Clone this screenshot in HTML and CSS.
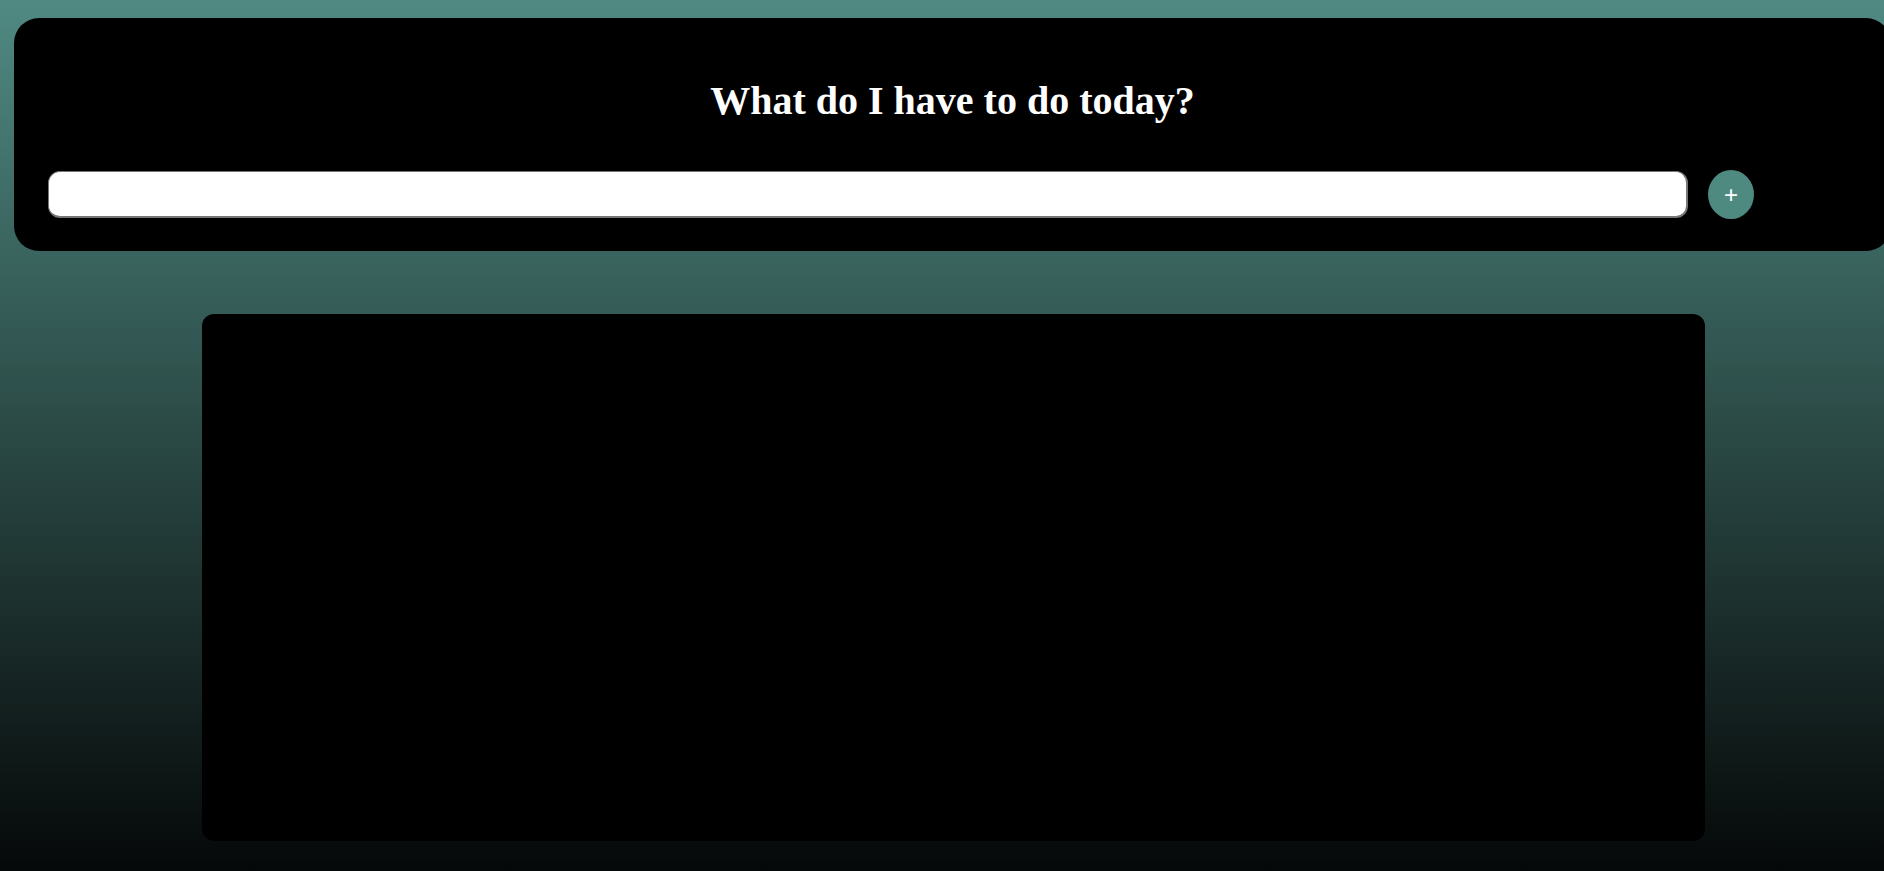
FILE: index.html
```html
<!DOCTYPE html>
<html lang="en">
<head>
<meta charset="utf-8">
<title>Todo</title>
<link rel="stylesheet" href="styles.css">
</head>
<body>
<header class="top">
  <h1 class="title">What do I have to do today?</h1>
  <div class="entry">
    <input class="task-input" type="text">
    <button class="add-btn" type="button">+</button>
  </div>
</header>
<main class="list"></main>
</body>
</html>
```

FILE: styles.css
```css
html, body {
  margin: 0;
  padding: 0;
}
body {
  min-height: 100vh;
  overflow: hidden;
  background: linear-gradient(to bottom, #508a82 0%, #050808 100%);
  font-family: "Liberation Serif", "Times New Roman", serif;
  padding-top: 18px;
  box-sizing: border-box;
}
.top {
  margin-left: 14px;
  width: 1877px;
  box-sizing: border-box;
  height: 233px;
  background: #000;
  border-radius: 25px;
  padding: 1px 34px 0 34px;
}
.title {
  margin: 0;
  padding-top: 58px;
  color: #fff;
  text-align: center;
  font-size: 40px;
  font-weight: bold;
  line-height: 48px;
}
.entry {
  display: flex;
  align-items: center;
  gap: 20px;
  margin-top: 45px;
}
.task-input {
  width: 1640px;
  height: 47px;
  box-sizing: border-box;
  border: 1px solid #767676;
  border-bottom-width: 2px;
  border-right-width: 2px;
  border-radius: 12px;
  background: #fff;
  margin: 0;
}
.add-btn {
  width: 46px;
  height: 49px;
  border-radius: 50%;
  border: none;
  background: #4f8a81;
  color: #fff;
  font-family: "Liberation Sans", Arial, sans-serif;
  font-size: 24px;
  font-weight: normal;
  line-height: 1;
  padding: 0;
  margin: 0;
}
.list {
  display: block;
  margin: 63px 0 0 202px;
  width: 1503px;
  height: 527px;
  background: #000;
  border-radius: 12px;
}
```
